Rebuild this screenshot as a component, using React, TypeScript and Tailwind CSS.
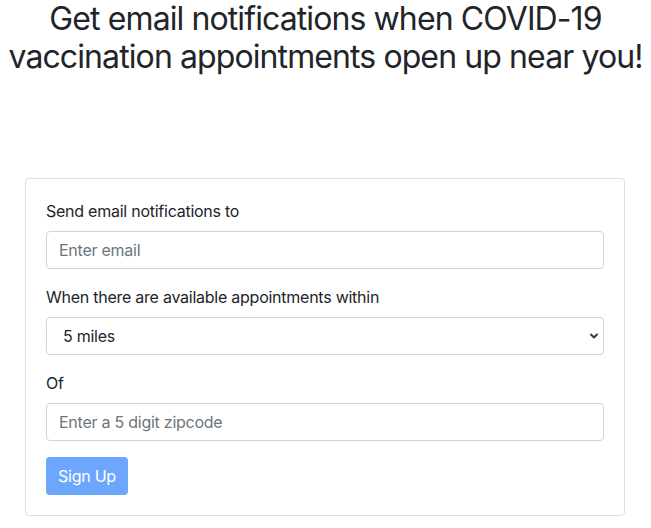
import React, { useState } from "react";

const font = { fontFamily: "Inter, 'Liberation Sans', Arial, sans-serif" };

export default function App() {
  const [email, setEmail] = useState("");
  const [miles, setMiles] = useState("5");
  const [zip, setZip] = useState("");

  return (
    <div className="min-h-screen bg-white text-[#212529] tracking-[-0.25px]" style={font}>
      <h1 className="text-center text-[32px] leading-[38px] font-normal tracking-[-0.9px]">
        Get email notifications when COVID-19 vaccination appointments open up near you!
      </h1>

      <div className="mt-[102px] ml-[25px] w-[600px] rounded border border-[rgba(0,0,0,0.125)] p-5">
        <form onSubmit={(e) => e.preventDefault()}>
          <div className="mb-4">
            <label className="mb-2 block text-base leading-6">Send email notifications to</label>
            <input
              type="email"
              value={email}
              onChange={(e) => setEmail(e.target.value)}
              placeholder="Enter email"
              className="block h-[38px] w-full rounded border border-[#ced4da] px-3 text-base text-[#212529] placeholder:text-[#6c757d] outline-none"
            />
          </div>

          <div className="mb-4">
            <label className="mb-2 block text-base leading-6">When there are available appointments within</label>
            <div className="relative">
              <select
                value={miles}
                onChange={(e) => setMiles(e.target.value)}
                className="block h-[38px] w-full appearance-none rounded border border-[#ced4da] bg-white pl-4 pr-9 text-base text-[#212529] outline-none"
              >
                <option value="5">5 miles</option>
                <option value="10">10 miles</option>
                <option value="25">25 miles</option>
                <option value="50">50 miles</option>
              </select>
              <svg
                className="pointer-events-none absolute right-[5px] top-1/2 h-[10px] w-[10px] -translate-y-1/2"
                viewBox="0 0 10 10"
                fill="none"
                stroke="#343a40"
                strokeWidth="2"
                strokeLinecap="round"
                strokeLinejoin="round"
              >
                <path d="M2 3.5 5 6.5 8 3.5" />
              </svg>
            </div>
          </div>

          <div className="mb-4">
            <label className="mb-2 block text-base leading-6">Of</label>
            <input
              type="text"
              value={zip}
              onChange={(e) => setZip(e.target.value)}
              placeholder="Enter a 5 digit zipcode"
              className="block h-[38px] w-full rounded border border-[#ced4da] px-3 text-base text-[#212529] placeholder:text-[#6c757d] outline-none"
            />
          </div>

          <button
            type="submit"
            disabled
            className="h-[38px] rounded bg-[#0d6efd] px-3 text-base text-white opacity-60"
          >
            Sign Up
          </button>
        </form>
      </div>
    </div>
  );
}
